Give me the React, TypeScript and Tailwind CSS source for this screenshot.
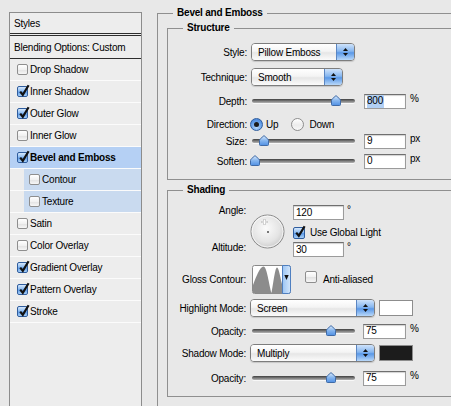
import { useId } from "react"

type Layer = { name: string; on: boolean; active?: boolean; sub?: boolean }

const layers: Layer[] = [
  { name: "Drop Shadow", on: false },
  { name: "Inner Shadow", on: true },
  { name: "Outer Glow", on: true },
  { name: "Inner Glow", on: false },
  { name: "Bevel and Emboss", on: true, active: true },
  { name: "Contour", on: false, sub: true },
  { name: "Texture", on: false, sub: true },
  { name: "Satin", on: false },
  { name: "Color Overlay", on: false },
  { name: "Gradient Overlay", on: true },
  { name: "Pattern Overlay", on: true },
  { name: "Stroke", on: true },
]

function useSvgId() {
  return "g" + useId().replace(/[^a-zA-Z0-9]/g, "")
}

function CheckBox({ checked = false, big = false }: { checked?: boolean; big?: boolean }) {
  return (
    <span
      className={`relative inline-block shrink-0 rounded-[2px] border ${big ? "h-[12px] w-[12px]" : "h-[11px] w-[11px]"} ${
        checked
          ? "border-[#2f5d9e] bg-[linear-gradient(#d6e8fc,#8dbcf1_45%,#5d9be8_55%,#a9d0f7)]"
          : "border-[#8e8e8e] bg-[linear-gradient(#ffffff,#f1f1f1_50%,#e3e3e3_55%,#f6f6f6)]"
      }`}
    >
      {checked && (
        <svg width="12" height="13" viewBox="0 0 12 13" className="absolute left-0 -top-[3px] overflow-visible">
          <path d="M2.2 7.6 L4.8 10.8 L10.6 1.2" fill="none" stroke="#111" strokeWidth="2.2" />
        </svg>
      )}
    </span>
  )
}

function Radio({ on = false }: { on?: boolean }) {
  return (
    <span
      className={`flex h-[13px] w-[13px] shrink-0 items-center justify-center rounded-full border ${
        on
          ? "border-[#2f5d9e] bg-[radial-gradient(circle_at_50%_75%,#b6d8fb,#5f9ae6_60%,#3d7cd3)]"
          : "border-[#8e8e8e] bg-[linear-gradient(#ffffff,#ececec_55%,#f8f8f8)]"
      }`}
    >
      {on && <span className="h-[5px] w-[5px] rounded-full bg-[#1b1b1b]" />}
    </span>
  )
}

function Popup({ label, className }: { label: string; className: string }) {
  return (
    <div
      className={`flex h-[18px] shrink-0 overflow-hidden rounded-[4px] border border-[#7d7d7d] shadow-[0_1px_1px_rgba(0,0,0,0.15)] ${className}`}
    >
      <div className="flex flex-1 items-center bg-[linear-gradient(#ffffff,#f4f4f4_45%,#e6e6e6_55%,#fbfbfb)] pl-[6px]">
        {label}
      </div>
      <div className="flex w-[18px] flex-col items-center justify-center gap-[2px] border-l border-[#5b86c2] bg-[linear-gradient(#cfe3fb,#86b6ef_45%,#5a98e7_55%,#b9d8f9)]">
        <svg width="5" height="3" viewBox="0 0 5 3">
          <path d="M0 3 L2.5 0 L5 3 Z" fill="#111" />
        </svg>
        <svg width="5" height="3" viewBox="0 0 5 3">
          <path d="M0 0 L2.5 3 L5 0 Z" fill="#111" />
        </svg>
      </div>
    </div>
  )
}

function Slider({ at, className = "" }: { at: number; className?: string }) {
  const id = useSvgId()
  return (
    <div className={`relative h-[12px] w-[106px] shrink-0 ${className}`}>
      <div className="ml-[2px] mr-[1px] mt-[4px] h-[4px] rounded-full bg-[linear-gradient(#3f3f3f,#7a7a7a_50%,#b5b5b5)] shadow-[0_1px_0_rgba(255,255,255,0.7)]" />
      <svg width="10" height="11" viewBox="0 0 10 11" className="absolute top-0" style={{ left: at }}>
        <defs>
          <linearGradient id={id} x1="0" y1="0" x2="0" y2="1">
            <stop offset="0" stopColor="#dcebfc" />
            <stop offset="0.5" stopColor="#86b6ef" />
            <stop offset="1" stopColor="#4f8fe3" />
          </linearGradient>
        </defs>
        <path
          d="M1.5 10.5 Q0.5 10.5 0.5 9.5 V5.5 Q0.5 4.6 1.3 3.9 L5 0.6 L8.7 3.9 Q9.5 4.6 9.5 5.5 V9.5 Q9.5 10.5 8.5 10.5 Z"
          fill={`url(#${id})`}
          stroke="#3f6aa6"
        />
      </svg>
    </div>
  )
}

function Field({ value, className, selected = false }: { value: string; className: string; selected?: boolean }) {
  return (
    <div
      className={`flex h-[15px] shrink-0 items-stretch border border-[#9b9b9b] border-t-[#6f6f6f] bg-white pl-[2px] shadow-[inset_0_1px_1px_rgba(0,0,0,0.18)] ${className}`}
    >
      <span className={`flex items-center leading-none ${selected ? "bg-[#b2d0f4] pr-[1px]" : ""}`}>{value}</span>
    </div>
  )
}

function AngleDial() {
  const id = useSvgId()
  return (
    <svg width="35" height="35" viewBox="0 0 35 35" className="ml-[4px] mt-[9px] shrink-0">
      <defs>
        <radialGradient id={id} cx="0.45" cy="0.4" r="0.6">
          <stop offset="0" stopColor="#fbfbfb" />
          <stop offset="0.7" stopColor="#e4e4e4" />
          <stop offset="1" stopColor="#cdcdcd" />
        </radialGradient>
      </defs>
      <circle cx="17.5" cy="17.5" r="16.5" fill={`url(#${id})`} stroke="#8a8a8a" />
      <circle cx="17.5" cy="17.5" r="15.5" fill="none" stroke="#ffffff" strokeOpacity="0.7" />
      <path d="M14.5 5 V11 M11.5 8 H17.5" stroke="#b0b0b0" strokeWidth="2" />
      <path d="M14.5 5.5 V10.5 M12 8 H17" stroke="#ffffff" strokeWidth="1" />
      <rect x="17" y="17" width="2" height="2" fill="#777777" />
    </svg>
  )
}

function ContourSwatch() {
  const id = useSvgId()
  return (
    <svg width="39" height="29" viewBox="0 0 39 29" className="ml-[6px] shrink-0">
      <defs>
        <linearGradient id={id} x1="0" y1="0" x2="1" y2="0">
          <stop offset="0" stopColor="#9cc5f4" />
          <stop offset="1" stopColor="#d3e6fb" />
        </linearGradient>
      </defs>
      <rect x="0.5" y="0.5" width="38" height="28" rx="2" fill="#ffffff" stroke="#8a8a8a" />
      <path
        d="M1 28 L1 20 C4 12 8 1.5 11.5 1.5 C15 1.5 17 20 19.5 28 C21.5 18 23 2.5 25 2.5 C27 2.5 28.5 14 30 19 L30 28 Z"
        fill="#8c8c8c"
      />
      <path d="M30.5 0.5 H36.5 Q38.5 0.5 38.5 2.5 V26.5 Q38.5 28.5 36.5 28.5 H30.5 Z" fill={`url(#${id})`} stroke="#4f7fc0" />
      <path d="M32.3 10 H36.7 L34.5 15 Z" fill="#111" />
    </svg>
  )
}

function Swatch({ className }: { className: string }) {
  return <div className={`h-[16px] w-[34px] shrink-0 border border-[#8d8d8d] ${className}`} />
}

function Unit({ children }: { children: string }) {
  return <span className="ml-[4px] self-start leading-[12px]">{children}</span>
}

export default function App() {
  return (
    <div className="flex h-[406px] w-[451px] items-start overflow-hidden bg-[#e8e8e8] font-['Liberation_Sans',Arial,sans-serif] text-[10px] tracking-[-0.2px] text-black">
      {/* style list */}
      <div className="ml-[9px] mt-[12px] h-[420px] w-[133px] shrink-0 border border-[#8c8c8c] bg-[#ededed]">
        <div className="flex h-[20px] items-center px-[4px]">Styles</div>
        <div className="h-[3px] border-y border-[#2d2d2d]" />
        <div className="flex h-[23px] items-center border-b border-[#2d2d2d] px-[4px]">Blending Options: Custom</div>
        {layers.map((layer) => (
          <div
            key={layer.name}
            className={`flex h-[22px] border-b border-[#fbfbfb] ${layer.active ? "bg-[#b5d0f4]" : ""} ${
              layer.sub ? "pl-[14px]" : ""
            }`}
          >
            <div className={`flex flex-1 items-center gap-[2px] ${layer.sub ? "bg-[#c9daef] pl-[5px]" : "pl-[7px]"}`}>
              <CheckBox checked={layer.on} />
              <span className={layer.active ? "font-bold" : ""}>{layer.name}</span>
            </div>
          </div>
        ))}
      </div>

      {/* bevel and emboss */}
      <fieldset className="ml-[15px] mt-[6px] w-[330px] shrink-0 border border-[#8f8f8f]">
        <legend className="ml-[15px] px-[4px] font-bold leading-[14px]">Bevel and Emboss</legend>
        <div className="pb-[30px] pl-[9px]">
          <fieldset className="mt-[1px] w-[310px] border border-[#8f8f8f]">
            <legend className="ml-[15px] px-[4px] font-bold leading-[14px]">Structure</legend>
            <div className="flex flex-col pb-[10px] pt-[8px]">
              <div className="flex h-[18px] items-center">
                <span className="w-[79px] text-right">Style:</span>
                <Popup label="Pillow Emboss" className="ml-[4px] w-[104px]" />
              </div>
              <div className="mt-[7px] flex h-[18px] items-center">
                <span className="w-[79px] text-right">Technique:</span>
                <Popup label="Smooth" className="ml-[4px] w-[92px]" />
              </div>
              <div className="mt-[7px] flex h-[16px] items-center">
                <span className="w-[79px] text-right">Depth:</span>
                <Slider at={81} className="ml-[3px]" />
                <Field value="800" selected className="ml-[8px] w-[42px]" />
                <Unit>%</Unit>
              </div>
              <div className="mt-[7px] flex h-[16px] items-center">
                <span className="w-[79px] text-right">Direction:</span>
                <span className="ml-[3px]">
                  <Radio on />
                </span>
                <span className="ml-[3px]">Up</span>
                <span className="ml-[13px]">
                  <Radio />
                </span>
                <span className="ml-[5px]">Down</span>
              </div>
              <div className="mt-[1px] flex h-[16px] items-center">
                <span className="w-[79px] text-right">Size:</span>
                <Slider at={9} className="ml-[3px]" />
                <Field value="9" className="ml-[8px] w-[42px]" />
                <Unit>px</Unit>
              </div>
              <div className="mt-[4px] flex h-[16px] items-center">
                <span className="w-[79px] text-right">Soften:</span>
                <Slider at={0} className="ml-[3px]" />
                <Field value="0" className="ml-[8px] w-[42px]" />
                <Unit>px</Unit>
              </div>
            </div>
          </fieldset>

          <fieldset className="mt-[3px] w-[310px] border border-[#8f8f8f]">
            <legend className="ml-[15px] px-[4px] font-bold leading-[14px]">Shading</legend>
            <div className="flex flex-col pb-[10px] pt-[8px]">
              <div className="flex items-start">
                <div className="-mt-[2px] flex h-[52px] w-[78px] flex-col justify-between text-right">
                  <span className="leading-[15px]">Angle:</span>
                  <span className="leading-[15px]">Altitude:</span>
                </div>
                <AngleDial />
                <div className="ml-[8px] flex flex-col">
                  <div className="flex">
                    <Field value="120" className="w-[51px]" />
                    <span className="ml-[3px] leading-[10px]">°</span>
                  </div>
                  <div className="mt-[6px] flex h-[13px] items-center">
                    <CheckBox checked big />
                    <span className="ml-[5px]">Use Global Light</span>
                  </div>
                  <div className="mt-[3px] flex">
                    <Field value="30" className="w-[51px]" />
                    <span className="ml-[3px] leading-[10px]">°</span>
                  </div>
                </div>
              </div>
              <div className="mt-[8px] flex h-[28px] items-center">
                <span className="w-[78px] text-right">Gloss Contour:</span>
                <ContourSwatch />
                <span className="ml-[14px]">
                  <CheckBox big />
                </span>
                <span className="ml-[6px]">Anti-aliased</span>
              </div>
              <div className="mt-[6px] flex h-[18px] items-center">
                <span className="w-[78px] text-right">Highlight Mode:</span>
                <Popup label="Screen" className="ml-[4px] w-[125px]" />
                <Swatch className="ml-[4px] bg-white" />
              </div>
              <div className="mt-[6px] flex h-[16px] items-center">
                <span className="w-[78px] text-right">Opacity:</span>
                <Slider at={76} className="ml-[4px]" />
                <Field value="75" className="ml-[7px] w-[43px]" />
                <Unit>%</Unit>
              </div>
              <div className="mt-[5px] flex h-[18px] items-center">
                <span className="w-[78px] text-right">Shadow Mode:</span>
                <Popup label="Multiply" className="ml-[4px] w-[125px]" />
                <Swatch className="ml-[4px] bg-[#1c1c1c]" />
              </div>
              <div className="mt-[8px] flex h-[16px] items-center">
                <span className="w-[78px] text-right">Opacity:</span>
                <Slider at={76} className="ml-[4px]" />
                <Field value="75" className="ml-[7px] w-[43px]" />
                <Unit>%</Unit>
              </div>
            </div>
          </fieldset>
        </div>
      </fieldset>
    </div>
  )
}
